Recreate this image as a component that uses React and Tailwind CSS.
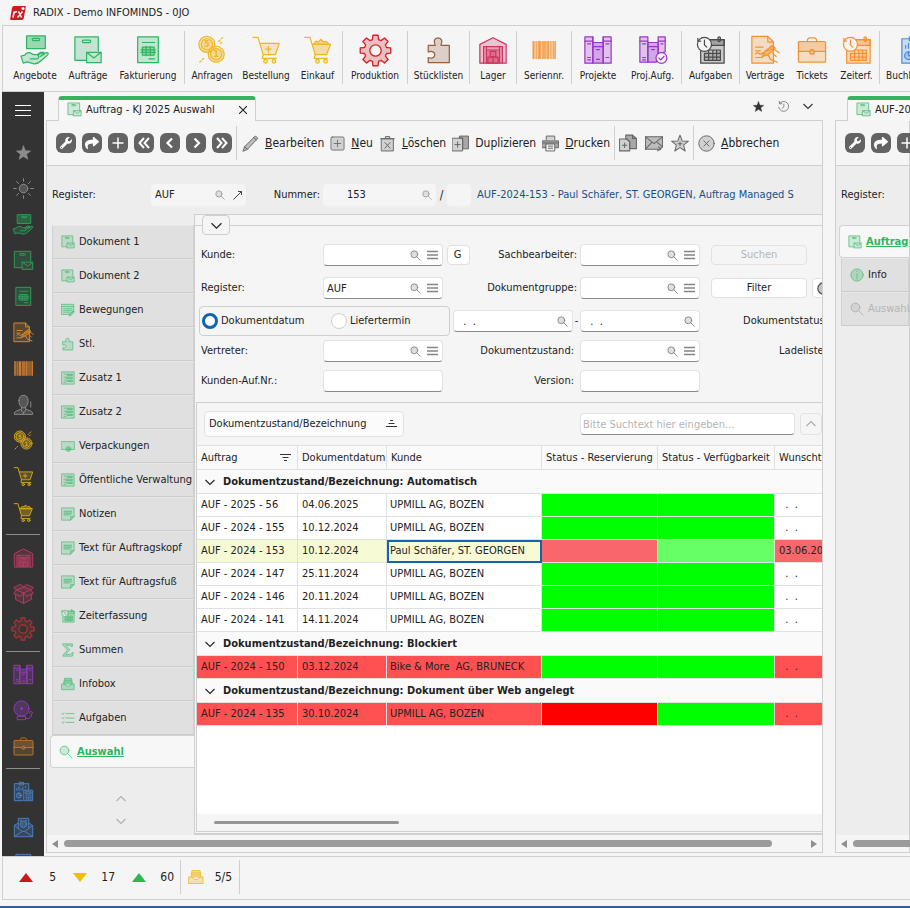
import React, { useState } from 'react';
import clsx from 'clsx';
import { FaShare, FaWrench } from 'react-icons/fa';

/* ---------- Icons (32 x 32 grid, tinted line drawings) ---------- */

const Svg = ({ size = 30, sw = 1.4, children }) => (
  <svg
    width={size}
    height={size}
    viewBox="0 0 32 32"
    stroke="currentColor"
    strokeWidth={sw}
    strokeLinejoin="round"
    strokeLinecap="round"
    fill="currentColor"
    fillOpacity=".25"
    className="shrink-0"
    aria-hidden="true"
  >
    {children}
  </svg>
);

// outline of a cog with 8 teeth around the centre of the grid
const gearPath = (() => {
  const pts = [];
  for (let i = 0; i < 8; i++) {
    const a = (i * Math.PI) / 4 - Math.PI / 2;
    [[-0.27, 11], [-0.17, 15], [0.17, 15], [0.27, 11]].forEach(([d, r]) => {
      pts.push(`${(16 + r * Math.cos(a + d)).toFixed(1)} ${(16 + r * Math.sin(a + d)).toFixed(1)}`);
    });
  }
  return `M${pts.join('L')}Z`;
})();

const BoxHandIcon = (p) => (
  <Svg {...p}>
    <rect x="7" y="1" width="20" height="13.500" fillOpacity=".45" />
    <rect x="13" y="3.500" width="8" height="2.400" rx="1.200" fill="none" />
    <path d="M1 22.500l4-1c2-3 5-3.500 7.500-1.500 1 .8 2 1 3.500 1h2.500l3-2.500h4l-1 2 3-1.500c2-.8 3.500.5 2 2.200l-7 6.300c-2 2-4.500 3.200-7 3.200-3 0-5-2-8-2L3.500 30z" />
    <path d="M11 25.500h7c2.400 0 2.400-3.800.4-4.500M19 21.500l2.500-1.500h4.500M21.500 23l4-2.500" fill="none" />
  </Svg>
);

const BoxMailIcon = (p) => (
  <Svg {...p}>
    <path d="M27 17V2H2v25h12" fill="none" />
    <path d="M2 2h25v16H14v9H2z" stroke="none" />
    <rect x="10" y="5.500" width="9" height="2.600" rx="1.300" fill="none" />
    <rect x="14.500" y="18.500" width="15.500" height="11" />
    <path d="M14.500 18.500l7.700 6 7.800-6" fill="none" />
  </Svg>
);

const InvoiceIcon = (p) => (
  <Svg {...p}>
    <rect x="5" y="2" width="22" height="27.500" />
    <path d="M10 8h13M17 25.500h6" />
    <rect x="10" y="13" width="12.500" height="8.500" fillOpacity=".35" />
    <path d="M8.500 15.800h15.500M8.500 18.600h15.500M14 12v10M18.500 12v10" />
  </Svg>
);

const CoinsIcon = (p) => (
  <Svg {...p}>
    <circle cx="10.500" cy="10" r="8.500" />
    <circle cx="10.500" cy="10" r="6" />
    <circle cx="20.500" cy="20.500" r="8.500" />
    <circle cx="20.500" cy="20.500" r="6" />
    <path d="M23 7l5-5M25 9l2-2M3 29l4-4" strokeDasharray="2 2" fill="none" />
    <g fillOpacity="1" stroke="none" fontFamily="DejaVu Sans Condensed, sans-serif" fontWeight="bold" fontSize="9" textAnchor="middle">
      <text x="10.500" y="13.300">5</text>
      <text x="20.500" y="23.800">1</text>
    </g>
  </Svg>
);

const CartPlusIcon = (p) => (
  <Svg {...p}>
    <path d="M2 2.500h5.500L13 21h13l4-12H10" fill="none" />
    <path d="M9.500 9H30l-4 12H13z" stroke="none" />
    <path d="M18.500 12v6M15.500 15h6M13 21l-1 4h15" fill="none" />
    <circle cx="15.500" cy="28" r="1.900" />
    <circle cx="24.500" cy="28" r="1.900" />
  </Svg>
);

const CartFullIcon = (p) => (
  <Svg {...p}>
    <path d="M2 2.500h5.500L13 21h12l4.500-11H9.800" fill="none" />
    <path d="M9.800 10h19.700L25 21H13z" fillOpacity=".4" stroke="none" />
    <path d="M11 10l3-3.500 2.500 1L19 4.500l3 3 2.500-.8L28 10z" fillOpacity=".5" />
    <path d="M13 21l-1 4h14" fill="none" />
    <circle cx="15.500" cy="28" r="1.900" />
    <circle cx="24" cy="28" r="1.900" />
  </Svg>
);

const GearIcon = (p) => (
  <Svg {...p}>
    <path d={`${gearPath}M21.500 16a5.500 5.500 0 1 0-11 0 5.500 5.500 0 1 0 11 0z`} fillRule="evenodd" />
  </Svg>
);

const PuzzleIcon = (p) => (
  <Svg {...p}>
    <path d="M4.500 11H12c-2.500-4.500-.5-8 3-8s5.500 3.500 3 8h9v18.500h-22.500V24c4 2 7-.3 7-3s-3-4.500-7-2.800z" />
  </Svg>
);

const WarehouseIcon = (p) => (
  <Svg {...p}>
    <path d="M2 30V10l14-7 14 7v20z" />
    <path d="M6 30V12.500h20V30" />
    <path d="M9 30V16h14v14M9 12.500V16M23 12.500V16" fillOpacity=".3" />
    <path d="M13 17.500h6V23h-6zM10.500 23.500h5.500V30h-5.500zM16 23.500h5.500V30H16z" />
  </Svg>
);

const BarcodeIcon = (p) => (
  <Svg {...p}>
    <g stroke="none" fillOpacity=".85">
      <path d="M2 5h2v22H2zM6 5h1v22H6zM9 5h3v22H9zM14 5h1v22h-1zM20 5h2v22h-2zM24 5h1v22h-1zM27 5h1v22h-1zM29 5h1.500v22H29z" />
      <path d="M2 5h28.500v22H2z" fillOpacity=".4" />
      <path d="M15 5h4v22h-4z" fillOpacity=".6" />
    </g>
  </Svg>
);

const BindersIcon = (p) => (
  <Svg {...p}>
    <path d="M2 2h8.500v28H2zM21.500 2H30v28h-8.500z" />
    <path d="M10.500 8h11v22h-11z" fillOpacity=".4" />
    <path d="M2 6.500h8.500M10.500 12.500h11M21.500 6.500H30M5 9.500h3M5 24h3M5 26.500h3M14.500 15.500h3M14.500 26h3M24.500 9.500h3M24.500 24h3" />
    <path d="M10.500 8V2M21.500 8V2" />
  </Svg>
);

const BindersCheckIcon = (p) => (
  <Svg {...p}>
    <path d="M2 2h8.500v27H2zM21.500 2H29v16l-7.500 2z" />
    <path d="M10.500 8h11v12l-2 9h-9z" fillOpacity=".4" />
    <path d="M2 6.500h8.500M10.500 12.500h11M21.500 6.500H29M5 9.500h3M5 24h3M5 26.500h3M14.500 15.500h3M24.500 9.500h2" />
    <circle cx="25" cy="24.500" r="5.800" fill="#f5f5f5" fillOpacity="1" />
    <path d="M22.300 24.500l2 2 3.500-3.800" fill="none" />
  </Svg>
);

const ClockCalendarIcon = ({ clockFill = '#f5f5f5', ...p }) => (
  <Svg {...p}>
    <path d="M5 5h25v25H5z" />
    <path d="M5 5h25v6H5z" fillOpacity=".3" />
    <rect x="23.500" y="2" width="2.500" height="5" rx="1.200" />
    <path d="M13.500 16H26v11H9v-7.500h17M9 23.500h17M13.500 16v11M18 16v11M22 16v11" fillOpacity=".2" />
    <circle cx="9" cy="10" r="7.500" fill={clockFill} fillOpacity="1" />
    <path d="M9 5.500V10.500l2.500 2.500M2 3.500v3h3" fill="none" />
  </Svg>
);

const ContractIcon = (p) => (
  <Svg {...p}>
    <path d="M2 1.500h17l6 6V30H2z" />
    <path d="M19 1.500v6h6M6 13h8M6 20c3-3 4 2 6 0s3-1 4 0M6 24h7M6 17h5" fill="none" />
    <path d="M13 23l2-5L24 11l3 3-8 7z" fillOpacity=".5" />
    <path d="M18 17l4-2 5 1 4 3M19 21l3 5 7 3M24 19l4 4" fill="none" />
  </Svg>
);

const BriefcaseIcon = (p) => (
  <Svg {...p}>
    <rect x="1.500" y="7" width="29" height="22" rx="1" />
    <path d="M11 7c0-3 1-4 3-4h4c2 0 3 1 3 4" fill="none" />
    <path d="M1.500 17.500h12M18.500 17.500h12" fill="none" />
    <path d="M1.500 8h29v9.500h-29z" stroke="none" />
    <circle cx="16" cy="18" r="2.400" fillOpacity=".4" />
  </Svg>
);

const ReportCalcIcon = (p) => (
  <Svg {...p}>
    <path d="M24 13V4H2v26h13" fill="none" />
    <path d="M2 4h22v10h-8v16H2z" stroke="none" />
    <path d="M10 2h6v4h-6zM6 14v-3M9 14v-5M12 14v-2M15 14v-4M19 10v-2" fill="none" />
    <circle cx="9" cy="22" r="4" />
    <path d="M9 18v4h4" fill="none" />
    <rect x="17" y="14" width="13" height="16" fillOpacity=".3" />
    <path d="M19.500 16.500h8v3h-8zM20 22.500h1.500M23 22.500h1.500M26 22.500h1.500M20 25h1.500M23 25h1.500M26 25h1.500M20 27.500h1.500M23 27.500h1.500M26 27.500h1.500" fill="none" />
  </Svg>
);

const PersonIcon = (p) => (
  <Svg {...p}>
    <path d="M9 10c0-5 3-8 7-8s7 3 7 8-2 11-7 11S9 15 9 10z" fillOpacity=".4" />
    <path d="M13 20v3l-8 3c-2 1-3 2-3 5h28c0-3-1-4-3-5l-8-3v-3" />
    <path d="M12 24l4 5 4-5M16 29v2M27 12v8" fill="none" />
  </Svg>
);

const OpenBoxIcon = (p) => (
  <Svg {...p}>
    <path d="M4 17v8l12 6 12-6v-8" />
    <path d="M16 6L5 10.500 16 15l11-4.500zM16 15v16" fillOpacity=".3" />
    <path d="M5 10.500L1 16l10.500 4.500L16 15M27 10.500L31 16l-10.500 4.500L16 15M5 10.500L1 7l10.500-5L16 6l4.500-4L31 7l-4 3.500" />
  </Svg>
);

const BellIcon = (p) => (
  <Svg {...p}>
    <circle cx="13" cy="13" r="11.500" fillOpacity=".35" />
    <circle cx="13" cy="13" r="1.500" fillOpacity="1" />
    <path d="M7 25h12v5H7zM19 28c6 1 10-1 9-7M30 20a2.500 2.500 0 1 0-5 0" fill="none" />
  </Svg>
);

const MailOpenIcon = (p) => (
  <Svg {...p}>
    <path d="M2 13v17h28V13l-6-4V2H8v7z" />
    <path d="M2 13l12 9h4l12-9M2 30l12-8M30 30l-12-8M8 9v8M24 9v8" fill="none" />
    <circle cx="16" cy="11" r="5" fillOpacity=".4" />
    <path d="M11 5h2M19 5h2" />
  </Svg>
);

const SunIcon = (p) => (
  <Svg {...p}>
    <circle cx="16" cy="16" r="6.500" fillOpacity=".4" />
    <path d="M16 1v4M16 27v4M1 16h4M27 16h4M5.500 5.500l3 3M23.500 23.500l3 3M26.500 5.500l-3 3M8.500 23.500l-3 3" />
  </Svg>
);

const StarIcon = (p) => (
  <Svg {...p}>
    <path d="M16 2l4 10.300 11 .5-8.600 6.900 2.900 10.600L16 24.300 6.700 30.300l2.900-10.600L1 12.800l11-.5z" fillOpacity="1" />
  </Svg>
);

const EditListIcon = (p) => (
  <Svg {...p}>
    <path d="M2 3h27v14L19 26H2z" />
    <path d="M2 8h27M6 13h3M12 13h13M6 17h3M12 17h11M6 21h3M12 21h7" />
    <path d="M19 29l1-4 8-8 3 3-8 8z" fillOpacity=".6" />
  </Svg>
);

const FormIcon = (p) => (
  <Svg {...p}>
    <rect x="2" y="2" width="28" height="28" />
    <path d="M7 7h5M15 7h11v3H15zM7 14h2M12 14h14v3H12zM7 21h5M15 21h11v3H15zM7 26h4" fillOpacity=".5" />
  </Svg>
);

const PackageIcon = (p) => (
  <Svg {...p}>
    <rect x="1.500" y="6" width="29" height="18" />
    <circle cx="17" cy="23" r="5.500" fillOpacity=".5" />
    <circle cx="17" cy="23" r="1.500" />
  </Svg>
);

const NoteIcon = (p) => (
  <Svg {...p}>
    <path d="M2 2h28v20l-8 8H2z" />
    <path d="M22 30v-8h8M7 10h17M7 14h17M7 18h12" />
    <path d="M6 8h19v11H6z" stroke="none" />
  </Svg>
);

const SigmaIcon = (p) => (
  <Svg {...p}>
    <path d="M4 2h22v6h-3c0-2-1-3-3-3H11l9 10.500L10 26h11c2 0 3-1 4-4h3l-2 8H4v-2l11-12L4 4z" />
  </Svg>
);

const InboxIcon = (p) => (
  <Svg {...p}>
    <path d="M6 15L8 3h16l2 12z" fillOpacity=".5" />
    <path d="M8 7.500h16M7 11.500h18" fill="none" />
    <path d="M2 16h8c0 4 2 5 6 5s6-1 6-5h8v13H2z" fillOpacity=".35" />
  </Svg>
);

const TasksIcon = (p) => (
  <Svg {...p}>
    <path d="M11 6h19M11 16h19M11 26h19M2 6l2 2 3-4M2 16l2 2 3-4M2 26l2 2 3-4" fill="none" />
  </Svg>
);

const MagnifierIcon = (p) => (
  <Svg {...p}>
    <circle cx="12.500" cy="12.500" r="10" />
    <path d="M20 20l10 10" />
  </Svg>
);

const InfoIcon = (p) => (
  <Svg {...p}>
    <circle cx="16" cy="16" r="14" fillOpacity=".35" />
    <path d="M16 13v12M16 7.500v.5" />
  </Svg>
);

const PencilIcon = (p) => (
  <Svg {...p}>
    <path d="M2 30l3-8L25 2l5 4L10 27z" fillOpacity=".4" />
    <path d="M5 22l5 5M22 5l5 4" />
  </Svg>
);

const PlusBoxIcon = (p) => (
  <Svg {...p}>
    <rect x="2" y="2" width="28" height="28" rx="3" />
    <path d="M16 9v14M9 16h14" />
  </Svg>
);

const TrashIcon = (p) => (
  <Svg {...p}>
    <path d="M5 7h22v23H5zM3 7h26M12 7V3h8v4M11 14l10 11M21 14L11 25" />
  </Svg>
);

const DuplicateIcon = (p) => (
  <Svg {...p}>
    <path d="M14 6V2h17v24H20V6z" fillOpacity=".55" />
    <rect x="1" y="6" width="19" height="24" />
    <path d="M10.500 13v10M5.500 18h10" />
  </Svg>
);

const PrinterIcon = (p) => (
  <Svg {...p}>
    <path d="M8 9V2h16v7" />
    <path d="M1 11h30v13H1z" fillOpacity=".55" />
    <path d="M8 17h16v13H8z" fill="#f5f5f5" fillOpacity="1" />
    <path d="M12 21h8M12 25h8M1 15h30" />
  </Svg>
);

const CopyPagesIcon = (p) => (
  <Svg {...p}>
    <path d="M12 9V2h12l7 6v18H19V14l-5-5z" fillOpacity=".55" />
    <path d="M1 9h13l5 5v16H1zM24 2v6h7M10 16v8M6 20h8" />
  </Svg>
);

const MailSendIcon = (p) => (
  <Svg {...p}>
    <path d="M1 5h30v18l-4 4H1z" fillOpacity=".4" />
    <path d="M1 5l15 12L31 5M1 27l11-12M31 23l-9-8M22 30l6-3-4-4" fill="none" />
  </Svg>
);

const StarPlusIcon = (p) => (
  <Svg {...p}>
    <path d="M16 2l4 10.300 11 .5-8.600 6.900 2.900 10.600L16 24.300 6.700 30.300l2.900-10.600L1 12.800l11-.5z" />
    <path d="M16 14v7M12.500 17.500h7" />
  </Svg>
);

const CancelIcon = (p) => (
  <Svg {...p}>
    <circle cx="16" cy="16" r="14.500" />
    <path d="M11 11l10 10M21 11L11 21" />
  </Svg>
);

const ClockIcon = (p) => (
  <Svg {...p}>
    <circle cx="16" cy="16" r="14" fillOpacity=".35" />
    <path d="M16 8v8l5 4" fill="none" />
  </Svg>
);

const HistoryIcon = (p) => (
  <Svg {...p}>
    <path d="M4 8a14.500 14.500 0 1 1-2 10M4 1v7h7M17 9v8l-5 4" fill="none" />
  </Svg>
);

const Chevron = ({ dir = 'down', size = 10 }) => (
  <svg width={size} height={size} viewBox="0 0 10 10" fill="none" stroke="currentColor" strokeWidth="1.100" aria-hidden="true">
    <path d={dir === 'down' ? 'M.5 3L5 7.500 9.500 3' : 'M.5 7L5 2.500 9.500 7'} />
  </svg>
);

const MenuLines = () => (
  <svg width="11" height="10" viewBox="0 0 11 10" stroke="#858585" strokeWidth="1.500" aria-hidden="true">
    <path d="M0 1.500h11M0 5h11M0 8.500h11" />
  </svg>
);

const Logo = () => (
  <svg width="16" height="16" viewBox="0 0 16 16" aria-hidden="true">
    <path d="M4 1h11q1 0 .8 1l-2 11q-.3 2-2 2H1q-1 0-.8-1L2 3q.4-2 2-2z" fill="#cf1a20" />
    <path d="M3 12.500L4.200 6.500M3.800 8.500q1-2 3.200-1.800M7.500 12.500l5-6M8.500 6.500l3 6M11.500 3.500h3M13 2v3" stroke="#fff" strokeWidth="1.500" fill="none" />
  </svg>
);

/* ---------- Data ---------- */

const ribbonGroups = [
  [
    { label: 'Angebote', Icon: BoxHandIcon, color: 'text-[#2fb562]', width: 'w-[52px]' },
    { label: 'Aufträge', Icon: BoxMailIcon, color: 'text-[#2fb562]', width: 'w-[54px]' },
    { label: 'Fakturierung', Icon: InvoiceIcon, color: 'text-[#2fb562]', width: 'w-[66px]' },
  ],
  [
    { label: 'Anfragen', Icon: CoinsIcon, color: 'text-[#f0b71f]', width: 'w-[54px]' },
    { label: 'Bestellung', Icon: CartPlusIcon, color: 'text-[#f0b71f]', width: 'w-[54px]' },
    { label: 'Einkauf', Icon: CartFullIcon, color: 'text-[#f0b71f]', width: 'w-[49px]' },
  ],
  [{ label: 'Produktion', Icon: GearIcon, color: 'text-[#d3242c]', width: 'w-[64px]', size: 33 }],
  [{ label: 'Stücklisten', Icon: PuzzleIcon, color: 'text-[#96603f]', width: 'w-[61px]' }],
  [{ label: 'Lager', Icon: WarehouseIcon, color: 'text-[#d0345f]', width: 'w-[46px]' }],
  [{ label: 'Seriennr.', Icon: BarcodeIcon, color: 'text-[#f5922f]', width: 'w-[54px]', size: 26 }],
  [
    { label: 'Projekte', Icon: BindersIcon, color: 'text-[#9a35c8]', width: 'w-[52px]' },
    { label: 'Proj.Aufg.', Icon: BindersCheckIcon, color: 'text-[#9a35c8]', width: 'w-[57px]' },
  ],
  [{ label: 'Aufgaben', Icon: ClockCalendarIcon, color: 'text-[#4a4a4a]', width: 'w-[57px]' }],
  [
    { label: 'Verträge', Icon: ContractIcon, color: 'text-[#f5922f]', width: 'w-[50px]' },
    { label: 'Tickets', Icon: BriefcaseIcon, color: 'text-[#f5922f]', width: 'w-[44px]' },
    { label: 'Zeiterf.', Icon: ClockCalendarIcon, color: 'text-[#f5922f]', width: 'w-[45px]' },
  ],
  [{ label: 'Buchhaltung', Icon: ReportCalcIcon, color: 'text-[#4b8ee0]', width: 'w-[61px]' }],
];

const sideGroups = [
  [
    { name: 'Favoriten', Icon: StarIcon, color: 'text-[#8c8c8c]', size: 15 },
    { name: 'Darstellung', Icon: SunIcon, color: 'text-[#8c8c8c]' },
    { name: 'Angebote', Icon: BoxHandIcon, color: 'text-[#2c9c58]' },
    { name: 'Aufträge', Icon: BoxMailIcon, color: 'text-[#2c9c58]' },
    { name: 'Fakturierung', Icon: InvoiceIcon, color: 'text-[#2c9c58]' },
    { name: 'Verträge', Icon: ContractIcon, color: 'text-[#d98532]' },
    { name: 'Seriennummern', Icon: BarcodeIcon, color: 'text-[#d98532]' },
    { name: 'Kunden', Icon: PersonIcon, color: 'text-[#8c8c8c]' },
    { name: 'Anfragen', Icon: CoinsIcon, color: 'text-[#d2a416]' },
    { name: 'Bestellung', Icon: CartPlusIcon, color: 'text-[#d2a416]' },
    { name: 'Einkauf', Icon: CartFullIcon, color: 'text-[#d2a416]' },
  ],
  [
    { name: 'Lager', Icon: WarehouseIcon, color: 'text-[#b53a60]' },
    { name: 'Artikel', Icon: OpenBoxIcon, color: 'text-[#b53a60]' },
    { name: 'Produktion', Icon: GearIcon, color: 'text-[#b03339]', size: 24 },
  ],
  [
    { name: 'Projekte', Icon: BindersIcon, color: 'text-[#8e3cb4]' },
    { name: 'Service', Icon: BellIcon, color: 'text-[#8e3cb4]' },
    { name: 'Tickets', Icon: BriefcaseIcon, color: 'text-[#b8782f]' },
  ],
  [
    { name: 'Buchhaltung', Icon: ReportCalcIcon, color: 'text-[#4b7fbd]' },
    { name: 'Mail', Icon: MailOpenIcon, color: 'text-[#4b7fbd]' },
    { name: 'Dokumente', Icon: InvoiceIcon, color: 'text-[#4b7fbd]' },
  ],
];

const navItems = [
  { label: 'Dokument 1', Icon: BoxMailIcon },
  { label: 'Dokument 2', Icon: BoxMailIcon },
  { label: 'Bewegungen', Icon: EditListIcon },
  { label: 'Stl.', Icon: PuzzleIcon },
  { label: 'Zusatz 1', Icon: FormIcon },
  { label: 'Zusatz 2', Icon: FormIcon },
  { label: 'Verpackungen', Icon: PackageIcon },
  { label: 'Öffentliche Verwaltung', Icon: FormIcon },
  { label: 'Notizen', Icon: NoteIcon },
  { label: 'Text für Auftragskopf', Icon: NoteIcon },
  { label: 'Text für Auftragsfuß', Icon: NoteIcon },
  { label: 'Zeiterfassung', Icon: ClockCalendarIcon },
  { label: 'Summen', Icon: SigmaIcon },
  { label: 'Infobox', Icon: InboxIcon },
  { label: 'Aufgaben', Icon: TasksIcon },
  { label: 'Auswahl', Icon: MagnifierIcon, active: true },
];

const otherNavItems = [
  { label: 'Auftrag', Icon: BoxMailIcon, active: true },
  { label: 'Info', Icon: InfoIcon },
  { label: 'Auswahl', Icon: MagnifierIcon, disabled: true },
];

const EMPTY_DATE = '  .  .';

const groups = [
  {
    title: 'Automatisch',
    rows: [
      { nr: 'AUF - 2025 - 56', date: '04.06.2025', kunde: 'UPMILL AG, BOZEN' },
      { nr: 'AUF - 2024 - 155', date: '10.12.2024', kunde: 'UPMILL AG, BOZEN' },
      { nr: 'AUF - 2024 - 153', date: '10.12.2024', kunde: 'Paul Schäfer, ST. GEORGEN', wunsch: '03.06.2025', selected: true },
      { nr: 'AUF - 2024 - 147', date: '25.11.2024', kunde: 'UPMILL AG, BOZEN' },
      { nr: 'AUF - 2024 - 146', date: '20.11.2024', kunde: 'UPMILL AG, BOZEN' },
      { nr: 'AUF - 2024 - 141', date: '14.11.2024', kunde: 'UPMILL AG, BOZEN' },
    ],
  },
  {
    title: 'Blockiert',
    rows: [{ nr: 'AUF - 2024 - 150', date: '03.12.2024', kunde: 'Bike & More  AG, BRUNECK', blocked: true }],
  },
  {
    title: 'Dokument über Web angelegt',
    rows: [{ nr: 'AUF - 2024 - 135', date: '30.10.2024', kunde: 'UPMILL AG, BOZEN', blocked: true, missing: true }],
  },
];

/* ---------- Shared parts ---------- */

const Field = ({ id, label, value = '', menu = true, search = true }) => (
  <div className="flex h-[22px] w-[120px] shrink-0 items-center gap-1.5 rounded border border-[#e2e2e2] border-b-[#8a8a8a] bg-white pl-[3px] pr-1">
    <input id={id} aria-label={label} defaultValue={value} className="h-full w-0 flex-1 whitespace-pre bg-transparent outline-none" />
    {search && (
      <button type="button" aria-label="Suchen" className="text-[#808080]">
        <MagnifierIcon size={11} sw={2.5} />
      </button>
    )}
    {search && menu && (
      <button type="button" aria-label="Liste">
        <MenuLines />
      </button>
    )}
  </div>
);

const darkButtons = [
  { name: 'Werkzeuge', Icon: FaWrench },
  { name: 'Weiterleiten', Icon: FaShare },
  { name: 'Hinzufügen', d: 'M10 4.500v11M4.500 10h11', w: 1.5 },
  { name: 'Erster', d: 'M10 5l-4.500 5 4.500 5M15 5l-4.500 5 4.500 5', w: 2 },
  { name: 'Zurück', d: 'M12 5.500L7.500 10l4.500 4.500', w: 2.2 },
  { name: 'Vor', d: 'M8.500 5.500L13 10l-4.500 4.500', w: 2.2 },
  { name: 'Letzter', d: 'M5 5l4.500 5L5 15M10 5l4.500 5-4.500 5', w: 2 },
];

const DarkButtons = () => (
  <div className="flex shrink-0 gap-1.5">
    {darkButtons.map(({ name, Icon, d, w }) => (
      <button key={name} type="button" aria-label={name} className="flex h-5 w-5 items-center justify-center rounded-md bg-[#636363] text-white">
        {Icon ? (
          <Icon size={name === 'Weiterleiten' ? 14 : 12} />
        ) : (
          <svg width="20" height="20" viewBox="0 0 20 20" fill="none" stroke="currentColor" strokeWidth={w}>
            <path d={d} />
          </svg>
        )}
      </button>
    ))}
  </div>
);

const NavList = ({ items }) => (
  <nav className="flex flex-col pl-[5px]">
    {items.map(({ label, Icon, active, disabled }) => (
      <button
        key={label}
        type="button"
        disabled={disabled}
        className={clsx(
          'flex shrink-0 items-center gap-1 whitespace-nowrap border text-left',
          active && '-ml-0.5 h-[33px] rounded-l border-[#d2d2d2] border-r-0 bg-[#f7f7f7] pl-2 font-bold text-[#2fb562] underline',
          !active && 'h-[34px] border-x-[#d0d0d0] border-b-[#cbcbcb] border-t-[#e8e8e8] bg-[#e0e0e0] pl-2',
          disabled && 'text-[#b4b4b4]'
        )}
      >
        <span className={disabled ? 'text-[#aaa]' : 'text-[#55bf7d]'}>
          <Icon size={14} sw={1.8} clockFill="#e0e0e0" />
        </span>
        {label}
      </button>
    ))}
  </nav>
);

const ArrowLeft = () => (
  <svg width="6" height="8" viewBox="0 0 6 8" fill="#8f8f8f" aria-hidden="true"><path d="M6 0v8L0 4z" /></svg>
);

// Document window: tab on top, framed body with a horizontal scroll bar below
const DocWindow = ({ title, tabWidth, tools, end, scroll, className, children }) => (
  <section className={clsx('flex flex-col overflow-hidden', className)}>
    <div className="flex h-[29px] shrink-0 items-end">
      <div className="w-3 shrink-0 self-stretch border-b border-[#cfcfcf]" />
      <div className={clsx('flex h-[25px] shrink-0 items-center whitespace-nowrap rounded-t border-x border-t-4 border-x-[#cfcfcf] border-t-[#35b35f] bg-[#f7f7f7] pb-0.5 pl-2', tabWidth)}>
        <span className="mr-1 text-[#55bf7d]"><BoxMailIcon size={15} sw={1.8} /></span>
        <span className="flex-1">{title}</span>
        <button type="button" aria-label="Tab schließen" className="mr-2">
          <svg width="8" height="8" viewBox="0 0 8 8" stroke="#222" strokeWidth="1.100"><path d="M0 0l8 8M8 0L0 8" /></svg>
        </button>
      </div>
      <div className="flex flex-1 items-center justify-end gap-3.5 self-stretch border-b border-[#cfcfcf] pr-2.5 text-[#333]">{end}</div>
    </div>
    <div className="flex min-h-0 flex-1 flex-col border border-t-0 border-[#cfcfcf] bg-[#ededed]">
      <div className="flex h-[45px] shrink-0 items-center border-b border-[#cfcfcf] bg-[#f5f5f5] pl-[9px] text-[12px]">
        <DarkButtons />
        {tools}
      </div>
      {children}
      <div className="flex h-[17px] shrink-0 items-center bg-[#f5f5f5] px-[5px]">
        <ArrowLeft />
        {scroll}
      </div>
    </div>
  </section>
);

const Tool = ({ Icon, children, width = 17 }) => (
  <button type="button" className="flex items-center gap-1.5 whitespace-nowrap">
    <span className="text-[#666]"><Icon size={width} sw={1.8} /></span>
    {children}
  </button>
);

/* ---------- Page parts ---------- */

const Ribbon = () => (
  <div className="flex h-[67px] shrink-0 items-start overflow-hidden border-b border-l border-t border-[#cfcfcf] pl-1.5 pt-[5px] text-[10px]">
    {ribbonGroups.map((items, i) => (
      <div key={items[0].label} className={clsx('flex h-[53px] shrink-0 border-r border-[#cfcfcf]', i === 0 && 'pr-[3px]', i === 9 && 'pl-1')}>
        {items.map(({ label, Icon, color, width, size = 30 }) => (
          <button key={label} type="button" className={clsx('flex flex-col items-center whitespace-nowrap', width)}>
            <span className={clsx('flex h-[38px] items-center', color)}>
              <Icon size={size} sw={1.3} />
            </span>
            <span className="h-[13px] leading-[13px]">{label}</span>
          </button>
        ))}
      </div>
    ))}
  </div>
);

const Sidebar = () => (
  <aside className="flex w-[42px] shrink-0 flex-col overflow-hidden bg-[#333]">
    <button type="button" aria-label="Menü" className="mb-1.5 flex h-9 shrink-0 items-center justify-center">
      <svg width="16" height="12" viewBox="0 0 16 12" stroke="#fff" strokeWidth="1"><path d="M0 1.500h16M0 6.500h16M0 11.500h16" /></svg>
    </button>
    {sideGroups.map((items, i) => (
      <div key={items[0].name} className="shrink-0">
        {i > 0 && <div className="mx-1 flex h-[9px] items-center"><hr className="w-full border-[#8c8c8c]" /></div>}
        {items.map(({ name, Icon, color, size = 21 }) => (
          <button key={name} type="button" aria-label={name} className={clsx('flex h-9 w-full items-center justify-center', color)}>
            <Icon size={size} sw={1.5} />
          </button>
        ))}
      </div>
    ))}
  </aside>
);

const Separator = ({ className }) => <div className={clsx('h-[34px] w-px shrink-0 bg-[#cfcfcf]', className)} />;

const Toolbar = () => (
  <>
    <Separator className="ml-1 mr-[5px]" />
    <div className="flex items-center gap-1.5">
      <Tool Icon={PencilIcon}><span><u>B</u>earbeiten</span></Tool>
      <Tool Icon={PlusBoxIcon} width={15}><span><u>N</u>eu</span></Tool>
      <Tool Icon={TrashIcon}><span><u>L</u>öschen</span></Tool>
      <Tool Icon={DuplicateIcon}>Duplizieren</Tool>
      <Tool Icon={PrinterIcon}><span><u>D</u>rucken</span></Tool>
    </div>
    <Separator className="mx-1" />
    <div className="flex items-center gap-2 text-[#666]">
      <button type="button" aria-label="Kopieren"><CopyPagesIcon size={18} sw={1.8} /></button>
      <button type="button" aria-label="Senden"><MailSendIcon size={18} sw={1.8} /></button>
      <button type="button" aria-label="Favorit"><StarPlusIcon size={18} sw={1.8} /></button>
    </div>
    <Separator className="mx-1" />
    <Tool Icon={CancelIcon}><span><u>A</u>bbrechen</span></Tool>
  </>
);

const RegisterRow = () => (
  <div className="flex h-[48px] shrink-0 items-center pb-0.5 pl-[5px] pt-3 text-[11px]">
    <label htmlFor="reg" className="w-[99px] shrink-0">Register:</label>
    <div className="flex h-[22px] w-[95px] shrink-0 items-center gap-2 rounded bg-[#f5f5f5] pl-1 pr-1">
      <input id="reg" defaultValue="AUF" className="w-0 flex-1 bg-transparent outline-none" />
      <span className="text-[#999]"><MagnifierIcon size={10} sw={2.500} /></span>
      <svg width="9" height="9" viewBox="0 0 9 9" fill="none" stroke="#444" aria-hidden="true"><path d="M.5 8.500l8-8M5 .5h3.500V4" /></svg>
    </div>
    <label htmlFor="num" className="w-[77px] shrink-0 pr-[3px] text-right">Nummer:</label>
    <div className="flex h-[22px] w-[113px] shrink-0 items-center rounded bg-[#f5f5f5] pl-6 pr-1">
      <input id="num" defaultValue="153" className="w-0 flex-1 bg-transparent outline-none" />
      <span className="text-[#999]"><MagnifierIcon size={10} sw={2.500} /></span>
    </div>
    <span className="w-[11px] text-center text-[12px]">/</span>
    <input aria-label="Unternummer" className="h-[22px] w-6 shrink-0 rounded bg-[#f5f5f5] outline-none" />
    <a href="#auftrag" className="ml-1.5 mr-7 flex-1 overflow-hidden whitespace-nowrap text-[#17508a]">
      AUF-2024-153 - Paul Schäfer, ST. GEORGEN, Auftrag Managed Services
    </a>
  </div>
);

const RightLabel = ({ htmlFor, children }) => (
  <label htmlFor={htmlFor} className="flex-1 pr-[3px] text-right">{children}</label>
);

const FilterForm = () => {
  const [mode, setMode] = useState('dokument');
  const radio = 'h-4 w-4 shrink-0 appearance-none rounded-full border border-[#cfcfcf] bg-white checked:border-[3px] checked:border-[#0f66b0]';

  return (
    <form className="flex shrink-0 flex-col pb-[5px] pt-[3px]" onSubmit={(e) => e.preventDefault()}>
      <div className="flex h-8 items-center pl-1.5">
        <label htmlFor="kunde" className="w-[122px] shrink-0">Kunde:</label>
        <Field id="kunde" />
        <button type="button" className="ml-1 h-5 w-[23px] shrink-0 rounded border border-[#e0e0e0] bg-white pr-0.5">G</button>
        <div className="flex w-[110px] shrink-0"><RightLabel htmlFor="sach">Sachbearbeiter:</RightLabel></div>
        <Field id="sach" />
        <button type="button" disabled className="ml-[11px] h-5 w-24 shrink-0 rounded border border-[#e2e2e2] text-[#b4b4b4]">Suchen</button>
      </div>
      <div className="flex h-[34px] items-center pl-1.5">
        <label htmlFor="register" className="w-[122px] shrink-0">Register:</label>
        <Field id="register" value="AUF" />
        <div className="flex w-[137px] shrink-0"><RightLabel htmlFor="gruppe">Dokumentgruppe:</RightLabel></div>
        <Field id="gruppe" />
        <button type="button" className="ml-[11px] h-5 w-24 shrink-0 rounded border border-[#e0e0e0] bg-white">Filter</button>
        <button type="button" aria-label="Filterverlauf" className="ml-[5px] flex h-5 w-7 shrink-0 items-center rounded border border-[#e0e0e0] bg-white pl-1 text-[#555]">
          <ClockIcon size={13} sw={3} />
        </button>
      </div>
      <div className="flex h-8 items-center pl-1">
        <fieldset className="flex h-[30px] w-[251px] shrink-0 items-center rounded border border-[#cfcfcf] pl-0.5">
          <label className="flex w-[129px] items-center gap-[3px]">
            <input type="radio" name="datum" className={radio} checked={mode === 'dokument'} onChange={() => setMode('dokument')} />
            Dokumentdatum
          </label>
          <label className="flex items-center gap-[3px]">
            <input type="radio" name="datum" className={radio} checked={mode === 'liefer'} onChange={() => setMode('liefer')} />
            Liefertermin
          </label>
        </fieldset>
        <div className="ml-[3px] flex"><Field label="Datum von" value={EMPTY_DATE} menu={false} /></div>
        <span className="w-[7px] shrink-0 text-center">-</span>
        <Field label="Datum bis" value={EMPTY_DATE} menu={false} />
        <div className="w-32 shrink-0 text-right">Dokumentstatus:</div>
      </div>
      <div className="flex h-7 items-center pl-1.5">
        <label htmlFor="vertreter" className="w-[122px] shrink-0">Vertreter:</label>
        <Field id="vertreter" />
        <div className="flex w-[137px] shrink-0 pr-[3px]"><RightLabel htmlFor="zustand">Dokumentzustand:</RightLabel></div>
        <Field id="zustand" />
        <div className="w-[127px] shrink-0 text-right">Ladeliste:</div>
      </div>
      <div className="flex h-8 items-center pl-1.5">
        <label htmlFor="aufnr" className="w-[122px] shrink-0">Kunden-Auf.Nr.:</label>
        <Field id="aufnr" search={false} />
        <div className="flex w-[137px] shrink-0 pr-[3px]"><RightLabel htmlFor="version">Version:</RightLabel></div>
        <Field id="version" search={false} />
      </div>
    </form>
  );
};

const GroupBar = () => (
  <div className="flex h-[42px] shrink-0 items-center pl-[7px]">
    <button type="button" className="flex h-[26px] w-[200px] shrink-0 items-center justify-between rounded border border-[#e2e2e2] bg-[#fbfbfb] pl-1 pr-1.5">
      Dokumentzustand/Bezeichnung
      <svg width="11" height="8" viewBox="0 0 11 8" stroke="#333" aria-hidden="true"><path d="M4 .5h3M2.500 3.500h6M0 6.500h11" /></svg>
    </button>
    <input
      aria-label="Suchtext"
      placeholder="Bitte Suchtext hier eingeben..."
      className="ml-44 h-[22px] w-[215px] shrink-0 rounded border border-[#e2e2e2] border-b-[#8a8a8a] bg-white px-0.5 outline-none placeholder:text-[#b4b4b4]"
    />
    <button type="button" aria-label="Vorheriger Treffer" className="ml-[5px] flex h-[22px] w-[22px] shrink-0 items-center justify-center rounded border border-[#e2e2e2] text-[#aaa]">
      <Chevron dir="up" />
    </button>
  </div>
);

const cell = 'h-[23px] overflow-hidden whitespace-pre border-b border-r border-[#e0e0e0] pr-0.5';

const OrderTable = () => (
  <div className="min-h-0 flex-1 overflow-hidden bg-white">
    <table className="w-full min-w-[678px] table-fixed border-separate border-spacing-0 text-left">
      <colgroup>
        <col className="w-[101px]" />
        <col className="w-[89px]" />
        <col className="w-[155px]" />
        <col className="w-[116px]" />
        <col className="w-[117px]" />
        <col />
      </colgroup>
      <thead className="bg-[#fafafa]">
        <tr>
          {['Auftrag', 'Dokumentdatum', 'Kunde', 'Status - Reservierung', 'Status - Verfügbarkeit', 'Wunschtermin'].map((h, i) => (
            <th key={h} scope="col" className="h-[25px] whitespace-nowrap border-b border-r border-t border-[#e0e0e0] p-0 pl-1 font-normal">
              <span className="flex items-center justify-between pr-1.5">
                {h}
                {i === 0 && (
                  <svg width="11" height="8" viewBox="0 0 11 8" stroke="#333" aria-hidden="true"><path d="M0 .5h11M2.500 3.500h6M4 6.500h3" /></svg>
                )}
              </span>
            </th>
          ))}
        </tr>
      </thead>
      {groups.map(({ title, rows }) => (
        <tbody key={title}>
          <tr>
            <th colSpan={6} scope="rowgroup" className="h-6 border-b border-[#e0e0e0] bg-[#fafafa] p-0">
              <span className="flex items-center gap-2 pl-2">
                <Chevron />
                Dokumentzustand/Bezeichnung: {title}
              </span>
            </th>
          </tr>
          {rows.map(({ nr, date, kunde, wunsch, selected, blocked, missing }) => (
            <tr key={nr} className={clsx(selected && 'bg-[#f6fbd6]', blocked && 'bg-[#ff5151]')}>
              <td className={clsx(cell, 'pl-1')}>{nr}</td>
              <td className={clsx(cell, 'pl-1')}>{date}</td>
              <td className={clsx(cell, 'pl-[3px]', selected && 'outline-2 -outline-offset-2 outline-[#0f66b0]')}>{kunde}</td>
              <td className={clsx(cell, selected ? 'bg-[#f9666b]' : missing ? 'bg-[#ff0000]' : 'bg-[#00ff00]')} />
              <td className={clsx(cell, selected ? 'bg-[#66ff66]' : 'bg-[#00ff00]')} />
              <td className={clsx(cell, 'pl-1', selected && 'bg-[#f9666b]')}>{wunsch || EMPTY_DATE}</td>
            </tr>
          ))}
        </tbody>
      ))}
    </table>
  </div>
);

const Selection = () => (
  <div className="flex min-w-0 flex-1 flex-col overflow-hidden border-b-2 border-l border-t border-[#cfcfcf] bg-[#f5f5f5]">
    <div className="mb-px flex h-5 shrink-0 items-center">
      <div className="h-px w-[7px] bg-[#cfcfcf]" />
      <button type="button" aria-label="Filter einklappen" className="flex h-5 w-7 items-center justify-center rounded border border-[#cfcfcf]">
        <Chevron size={11} />
      </button>
      <div className="h-px flex-1 bg-[#cfcfcf]" />
    </div>
    <FilterForm />
    <div className="mb-px ml-px flex min-h-0 flex-1 flex-col border-b border-l border-t border-[#cfcfcf]">
      <GroupBar />
      <OrderTable />
      <div className="flex h-[17px] shrink-0 items-center pl-[17px]">
        <div className="h-[3px] w-[185px] rounded bg-[#969696]" />
      </div>
    </div>
  </div>
);

const Footer = () => (
  <footer className="flex h-11 shrink-0 items-center border-b border-l border-t border-[#cfcfcf] pb-0.5 text-[12px]">
    {[
      { n: 5, color: '#cc1719', d: 'M0 9L7 0l7 9z' },
      { n: 17, color: '#f0bd00', d: 'M0 0h14L7 9z' },
      { n: 60, color: '#2db84d', d: 'M0 9L7 0l7 9z' },
    ].map(({ n, color, d }, i) => (
      <div key={n} className={clsx('flex w-[59px] items-center pr-1.5', i === 0 ? 'pl-4' : 'pl-[11px]')}>
        <svg width="14" height="9" viewBox="0 0 14 9" fill={color} aria-hidden="true"><path d={d} /></svg>
        <span className="flex-1 text-right">{n}</span>
      </div>
    ))}
    <Separator />
    <div className="flex w-[58px] items-center justify-between px-[7px] text-[#f0bd3a]">
      <InboxIcon size={16} sw={1.8} />
      <span className="text-[#222]">5/5</span>
    </div>
    <Separator />
  </footer>
);

const App = () => (
  <div className="flex h-screen flex-col overflow-hidden border-b-2 border-[#2f6496] bg-[#f5f5f5] pb-[6px] pl-0.5 font-['DejaVu_Sans_Condensed','DejaVu_Sans',sans-serif] text-[11px] leading-4 text-[#222]">
    <header className="flex h-[25px] shrink-0 items-center gap-[7px] pl-2">
      <Logo />
      <h1>RADIX - Demo INFOMINDS - 0JO</h1>
    </header>
    <Ribbon />
    <div className="flex min-h-0 flex-1">
      <Sidebar />
      <main className="flex min-w-0 flex-1 gap-3 pb-[3px] pl-0.5">
        <DocWindow
          title="Auftrag - KJ 2025 Auswahl"
          tabWidth="w-[198px]"
          className="min-w-0 flex-1"
          tools={<Toolbar />}
          end={
            <>
              <button type="button" aria-label="Favorit" className="text-[#333]"><StarIcon size={11} /></button>
              <button type="button" aria-label="Verlauf" className="text-[#777]"><HistoryIcon size={11} sw={2.500} /></button>
              <button type="button" aria-label="Mehr"><Chevron /></button>
            </>
          }
          scroll={
            <>
              <div className="ml-1.5 mr-[39px] h-[7px] flex-1 rounded-full bg-[#9b9b9b]" />
              <svg width="6" height="8" viewBox="0 0 6 8" fill="#8f8f8f" aria-hidden="true"><path d="M0 0v8l6-4z" /></svg>
            </>
          }
        >
          <RegisterRow />
          <div className="flex min-h-0 flex-1">
            <div className="flex w-[147px] shrink-0 flex-col pt-[11px]">
              <NavList items={navItems} />
              <div className="flex flex-col items-center gap-3 pt-[26px] text-[#b0b0b0]">
                <button type="button" aria-label="Nach oben"><Chevron dir="up" /></button>
                <button type="button" aria-label="Nach unten"><Chevron /></button>
              </div>
            </div>
            <Selection />
          </div>
        </DocWindow>
        <DocWindow
          title="AUF-2024-153"
          tabWidth="w-[140px]"
          className="w-[75px] shrink-0"
          scroll={<div className="-mr-4 ml-1.5 h-[7px] flex-1 rounded-full bg-[#9b9b9b]" />}
        >
          <div className="flex h-[59px] shrink-0 items-start pl-[5px] pt-[21px]">Register:</div>
          <div className="flex min-h-0 flex-1 flex-col">
            <NavList items={otherNavItems} />
          </div>
        </DocWindow>
      </main>
    </div>
    <Footer />
  </div>
);

export default App;
